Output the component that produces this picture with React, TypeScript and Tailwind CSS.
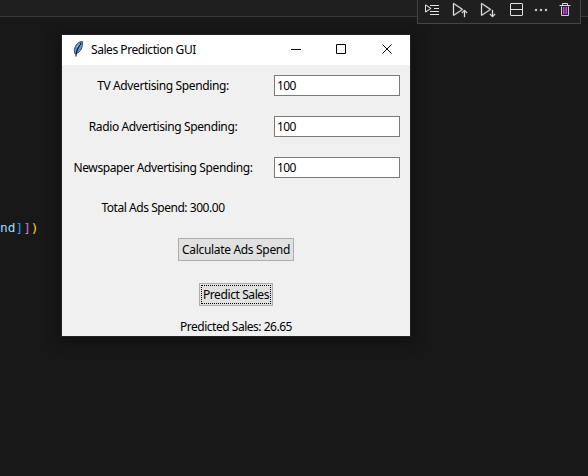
import { VscRunAbove, VscRunBelow, VscSplitVertical, VscEllipsis, VscDebugLineByLine } from "react-icons/vsc";

const ui = "font-['Noto_Sans',sans-serif] text-[12px] leading-[16px] whitespace-nowrap text-black";

function Feather() {
  return (
    <svg width="12" height="18" viewBox="0 0 12 18" className="block">
      <path d="M2.200 14C.8 11.500 1.200 6.500 4.500 3.500 6 2 7.800 1.500 9.500 1.500c.3 3-.2 5.500-1.200 7.500-1.200 2.500-3 3.800-5 4.500z" fill="#5b9be0" stroke="#26303c" strokeWidth=".8" />
      <path d="M8.300 3C5.500 6 3.500 9.500 2.800 16.500" stroke="#111" strokeWidth="1.100" fill="none" />
      <path d="M3.800 7.500 6.500 4" stroke="#9cc8f5" strokeWidth="1" />
    </svg>
  );
}

function Trash() {
  return (
    <svg width="12" height="14" viewBox="0 0 12 14" className="ml-[10px] mt-px block shrink-0" fill="none">
      <path d="M2.500 3.500v9h7v-9" fill="#3c1a48" stroke="#dcc6e6" />
      <path d="M.5 2.500h11M3.500 2V.5h5V2" stroke="#e2d5e8" />
      <path d="M4.500 4v7M6 4v7M7.500 4v7" stroke="#c855d0" strokeWidth=".9" />
    </svg>
  );
}

function Row({ label }: { label: string }) {
  return (
    <div className="mb-5 flex h-[21px] items-center">
      <div className="w-[202px] text-center tracking-[-0.38px]">{label}</div>
      <div className="ml-[10px] flex h-[21px] w-[126px] items-center border border-[#7a7a7a] bg-white pl-[2px] tracking-[-0.6px]">100</div>
    </div>
  );
}

export default function App() {
  return (
    <div className="relative h-[476px] w-[588px] overflow-hidden bg-[#181818]">
      <div className="h-[17px] border-b border-[#37373d] bg-[#1f1f1f]" />
      <div className="absolute top-[-4px] left-[417px] flex h-[28px] w-[164px] border border-[#454545] bg-[#1f1f1f] pt-[5px] text-[#e0e0e0]">
        <VscDebugLineByLine className="ml-[6px] size-4 shrink-0" />
        <VscRunAbove className="ml-[12px] size-4 shrink-0" strokeWidth={0.3} />
        <VscRunBelow className="ml-[12px] size-4 shrink-0" strokeWidth={0.3} />
        <VscSplitVertical className="ml-[12px] size-4 shrink-0" />
        <VscEllipsis className="ml-[9px] size-4 shrink-0" strokeWidth={0.4} />
        <Trash />
      </div>
      <div className="pt-[201px] font-['DejaVu_Sans_Mono',monospace] text-[12.8px] leading-[19px] text-[#9cdcfe]">
        nd<span className="text-[#179fff]">]</span><span className="text-[#da70d6]">]</span><span className="text-[#ffd700]">)</span>
      </div>
      <div className={`absolute top-[35px] left-[62px] h-[301px] w-[348px] bg-[#f0f0f0] shadow-[0_0_0_1px_#222222,0_3px_14px_2px_rgba(0,0,0,0.4)] ${ui}`}>
        <div className="flex h-[30px] items-center bg-white">
          <div className="mb-[2px] ml-[11px]"><Feather /></div>
          <div className="ml-[6px] w-[115px] tracking-[-0.45px]">Sales Prediction GUI</div>
          <svg width="112" height="12" viewBox="0 0 112 12" className="mb-[2px] ml-[84px] block" fill="none" stroke="#000">
            <path d="M1 6.500h10M46.500 1.500h9v9h-9zM92.500 1.500l9 9M101.500 1.500l-9 9" />
          </svg>
        </div>
        <div className="pt-[10px]">
          <Row label="TV Advertising Spending:" />
          <Row label="Radio Advertising Spending:" />
          <Row label="Newspaper Advertising Spending:" />
          <div className="mt-[22px] w-[202px] text-center tracking-[-0.46px]">Total Ads Spend: 300.00</div>
        </div>
        <div className="flex flex-col items-center pt-[22px]">
          <div className="flex h-[23px] w-[116px] items-center justify-center border border-[#adadad] bg-[#e1e1e1] tracking-[-0.32px]">Calculate Ads Spend</div>
          <div className="mt-[22px] h-[23px] w-[74px] border border-[#adadad] bg-[#e1e1e1] p-px">
            <div className="flex h-full items-center justify-center border border-dotted border-black tracking-[-0.4px]">Predict Sales</div>
          </div>
          <div className="mt-[13px] tracking-[-0.48px]">Predicted Sales: 26.65</div>
        </div>
      </div>
    </div>
  );
}
